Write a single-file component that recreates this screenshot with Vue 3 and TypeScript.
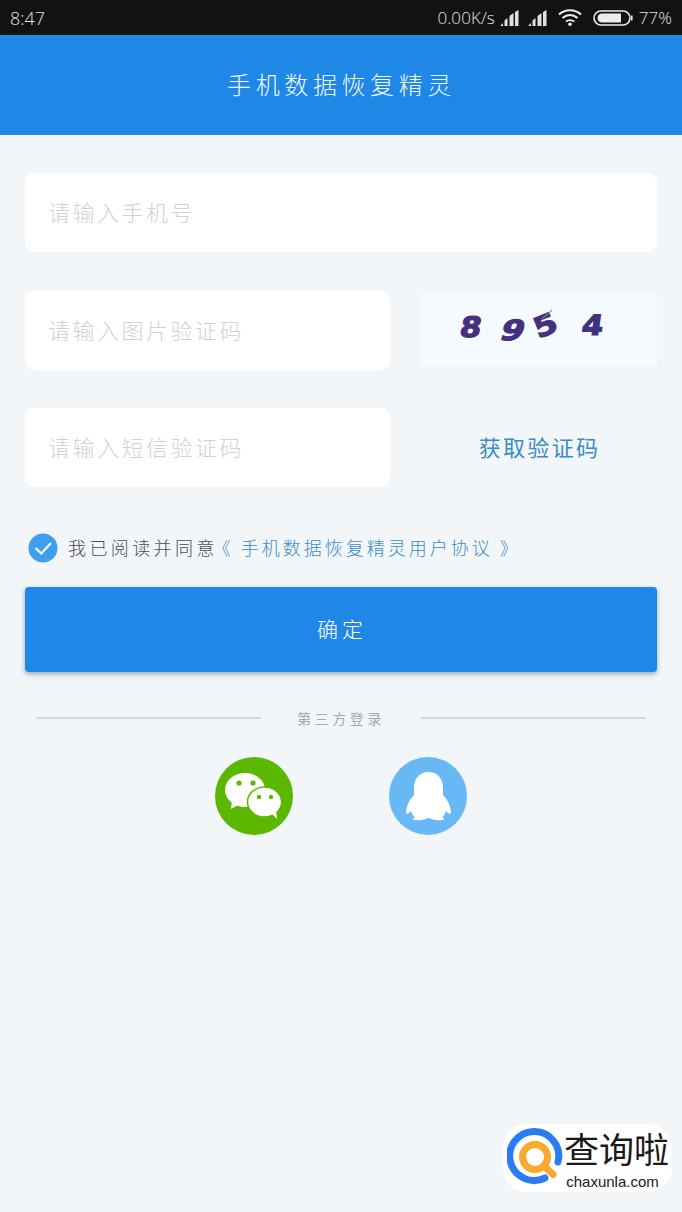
<script setup lang="ts">
const barsPath = "M0 16l3-3v3zM4.500 16V10.500L7.500 8v8zM9.500 16V6l4-3v13zM15 16V2l3.500-2v16z";
</script>

<template>
  <div class="page">
    <div class="status">
      <span class="time">8:47</span>
      <div class="status-right">
        <span class="speed">0.00K/s</span>
        <svg class="signal" width="19" height="16" viewBox="0 0 19 16"><path :d="barsPath" fill="#e2e2e2" /></svg>
        <svg class="signal two" width="19" height="16" viewBox="0 0 19 16"><path :d="barsPath" fill="#e2e2e2" /></svg>
        <svg class="wifi" width="24" height="17" viewBox="0 0 24 17">
          <path d="M1 5.500C7 -.2 17 -.2 23 5.500M4.500 9C9 5 15 5 19.500 9M8 12.500C10.200 10.800 13.800 10.800 16 12.500" fill="none" stroke="#ececec" stroke-width="2.200" />
          <circle cx="12" cy="15.200" r="1.800" fill="#ececec" />
        </svg>
        <svg class="battery" width="40" height="16" viewBox="0 0 40 16">
          <rect x="1" y="1" width="36" height="14" rx="7" fill="none" stroke="#ececec" stroke-width="1.600" />
          <path d="M9 3.500h19v9H9a4.500 4.500 0 0 1 0-9z" fill="#ececec" />
          <path d="M38.800 5.500v5" stroke="#ececec" stroke-width="1.500" />
        </svg>
        <span class="pct">77%</span>
      </div>
    </div>

    <header class="bar">手机数据恢复精灵</header>

    <main class="form">
      <div class="field">请输入手机号</div>

      <div class="row">
        <div class="field short">请输入图片验证码</div>
        <div class="captcha">
          <span class="d d1">8</span>
          <span class="d d2">9</span>
          <span class="d d3">5</span>
          <span class="d d4">4</span>
          <i class="noise"></i>
        </div>
      </div>

      <div class="row tight">
        <div class="field short">请输入短信验证码</div>
        <div class="get-code">获取验证码</div>
      </div>

      <div class="agree">
        <svg class="check" width="30" height="30" viewBox="0 0 30 30">
          <circle cx="15" cy="15" r="14.500" fill="#3f9eee" />
          <path d="M7.500 15l5.700 5.500L23 10" fill="none" stroke="#fff" stroke-width="2" />
        </svg>
        <span class="agree-text">我已阅读并同意</span>
        <span class="agree-link">《 手机数据恢复精灵用户协议 》</span>
      </div>

      <button class="submit" type="button">确定</button>

      <div class="divider">
        <span class="line"></span>
        <span class="divider-text">第三方登录</span>
        <span class="line"></span>
      </div>

      <div class="socials">
        <svg class="social" width="78" height="78" viewBox="0 0 78 78">
          <circle cx="39" cy="39" r="39" fill="#5cb700" />
          <ellipse cx="30" cy="33" rx="20" ry="17" fill="#fff" />
          <path d="M17 44l-1 8 9-5z" fill="#fff" />
          <ellipse cx="49.500" cy="45" rx="17" ry="15" fill="#fff" stroke="#5cb700" stroke-width="1.500" />
          <path d="M57 57l5 5-1-9z" fill="#fff" />
          <ellipse cx="50" cy="45" rx="15.500" ry="13.800" fill="#fff" />
          <circle cx="24" cy="26" r="2.600" fill="#5cb700" />
          <circle cx="38" cy="26" r="2.600" fill="#5cb700" />
          <circle cx="44" cy="40" r="2.200" fill="#5cb700" />
          <circle cx="56" cy="40" r="2.200" fill="#5cb700" />
        </svg>
        <svg class="social" width="78" height="78" viewBox="0 0 78 78">
          <circle cx="39" cy="39" r="39" fill="#68b8f6" />
          <path d="M39.500 15C30 15 25 22 25 31L25 38C20 43 17 50 17 56C18.500 58 20.500 56 22 54C23 57 24 59 26 60C23 61 23 63 27 63C32 64 36 62 39.500 61C43 62 47 64 52 63C56 63 56 61 53 60C55 59 56 57 57 54C58.500 56 60.500 58 62 56C62 50 59 43 54 38L54 31C54 22 49 15 39.500 15Z" fill="#fff" />
        </svg>
      </div>
    </main>

    <div class="mark">
      <svg class="mark-logo" width="58" height="60" viewBox="0 0 58 60">
        <path d="M51 35A24.500 24.500 0 1 0 38 51" fill="none" stroke="#2b7cf2" stroke-width="7" stroke-linecap="round" />
        <circle cx="28" cy="30" r="12.500" fill="none" stroke="#fba92c" stroke-width="7" />
        <path d="M37 39l9 8.500" stroke="#fba92c" stroke-width="7" stroke-linecap="round" />
      </svg>
      <div class="mark-text">
        <span class="mark-cn">查询啦</span>
        <span class="mark-en">chaxunla.com</span>
      </div>
    </div>
  </div>
</template>

<style>
html, body { margin: 0; }
</style>

<style scoped>
.page {
  position: relative;
  width: 682px;
  height: 1212px;
  overflow: hidden;
  background: #f2f6f9;
  font-family: "Noto Sans CJK SC", "Noto Sans", sans-serif;
}
.status {
  height: 35px;
  background: #121212;
  display: flex;
  align-items: center;
  justify-content: space-between;
  padding: 0 10px;
  box-sizing: border-box;
  color: #e2e2e2;
  font-family: "Open Sans", sans-serif;
  font-size: 16px;
}
.time { font-size: 18px; font-weight: 300; }
.status-right { display: flex; align-items: center; }
.speed { font-size: 17px; font-weight: 300; letter-spacing: .1px; }
.signal { margin-left: 5px; }
.signal.two { margin-left: 9px; }
.wifi { margin-left: 11px; }
.battery { margin-left: 11px; }
.pct { margin-left: 6px; font-weight: 300; font-size: 17px; }
.bar {
  height: 100px;
  background: #1f87e5;
  color: #eef7ff;
  display: flex;
  align-items: center;
  justify-content: center;
  font-size: 24px;
  letter-spacing: 4.600px;
  padding: 0 0 4px 1px;
  box-sizing: border-box;
  font-weight: 300;
}
.form { padding: 38px 25px 0; display: flex; flex-direction: column; }
.field {
  height: 79px;
  background: #fff;
  border-radius: 9px;
  padding: 0 0 4px 23px;
  display: flex;
  align-items: center;
  color: #cdd3da;
  font-size: 22px;
  letter-spacing: 2.500px;
  font-weight: 300;
  box-sizing: border-box;
}
.row { display: flex; align-items: flex-start; margin-top: 39px; }
.row.tight { margin-top: 38px; }
.field.short { width: 365px; flex: none; }
.captcha {
  position: relative;
  margin: 2px 0 0 30px;
  width: 238px;
  height: 72px;
  background: #f5fafe;
  font-family: "DejaVu Sans", sans-serif;
  font-weight: 700;
  font-size: 28px;
  color: #43307f;
  -webkit-text-stroke: 1.200px #43307f;
  overflow: hidden;
}
.d { position: absolute; display: block; line-height: 32px; }
.d1 { left: 41px; top: 19px; transform: skewX(-10deg) scaleX(1.100); }
.d2 { left: 83px; top: 22px; transform: skewX(-18deg) scaleX(1.200); }
.d3 { left: 116px; top: 17px; transform: rotate(-22deg) scaleX(1.200); }
.d4 { left: 163px; top: 17px; transform: skewX(-8deg) scaleX(1.100); }
.noise {
  position: absolute;
  left: 120px;
  top: 21px;
  width: 14px;
  height: 1px;
  background: #7d8a90;
  transform: rotate(-42deg);
}
.get-code {
  margin-left: 30px;
  width: 238px;
  padding-left: 2px;
  box-sizing: border-box;
  text-align: center;
  color: #3a8cc8;
  font-size: 22px;
  letter-spacing: 2.300px;
  line-height: 77px;
}
.agree {
  display: flex;
  align-items: center;
  height: 30px;
  margin-top: 46px;
  padding-left: 3px;
  font-size: 18px;
  letter-spacing: 3.400px;
  font-weight: 300;
}
.check { flex: none; }
.agree-text, .agree-link { padding-bottom: 2px; white-space: nowrap; }
.agree-text { margin-left: 10px; color: #4a4f55; }
.agree-link { color: #3a8cc8; letter-spacing: 3px; margin-left: -5px; }
.submit {
  margin-top: 24px;
  height: 85px;
  border: 0;
  border-radius: 4px;
  background: #1f87e5;
  color: #fff;
  font-family: inherit;
  font-size: 21px;
  letter-spacing: 4px;
  font-weight: 300;
  box-shadow: 0 2px 5px rgba(40, 70, 100, .45);
  padding: 0 0 4px 2px;
}
.divider {
  display: flex;
  align-items: center;
  justify-content: space-between;
  margin: 35px 11px 0;
  height: 22px;
}
.line { width: 225px; height: 2px; background: #d4d9dd; }
.divider-text {
  color: #a3a8ac;
  font-size: 14px;
  letter-spacing: 3.600px;
  font-weight: 400;
}
.socials {
  display: flex;
  justify-content: center;
  gap: 96px;
  margin-top: 28px;
}
.social { display: block; }
.mark {
  position: absolute;
  left: 503px;
  top: 1124px;
  width: 169px;
  height: 68px;
  background: #fff;
  border-radius: 24px;
  display: flex;
  align-items: flex-start;
  box-sizing: border-box;
  padding: 3px 0 0 4px;
}
.mark-logo { flex: none; }
.mark-text { display: flex; flex-direction: column; align-items: center; margin-left: -1px; }
.mark-cn {
  font-family: "Noto Sans CJK SC", sans-serif;
  font-size: 35px;
  line-height: 40px;
  color: #1a1a1a;
  white-space: nowrap;
  margin-top: 1px;
}
.mark-en {
  font-family: "Liberation Sans", sans-serif;
  font-size: 15px;
  line-height: 16px;
  color: #1a1a1a;
  margin-right: 8px;
  margin-top: 6px;
}
</style>
